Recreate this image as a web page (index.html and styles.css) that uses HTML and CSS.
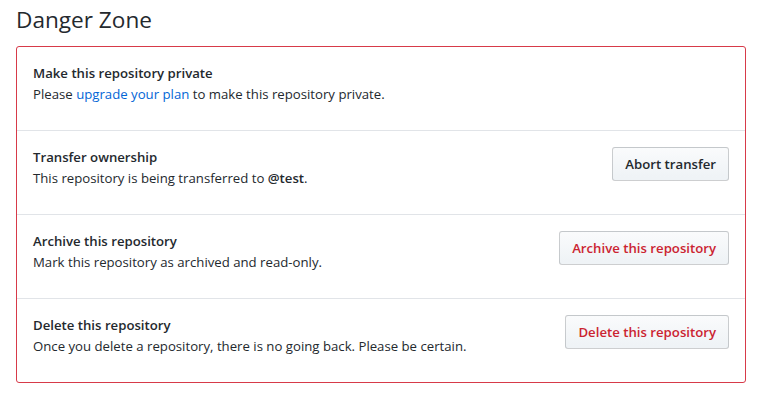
FILE: index.html
```html
<!DOCTYPE html>
<html lang="en">
<head>
  <meta charset="UTF-8">
  <title>Danger Zone</title>
  <link rel="stylesheet" href="styles.css">
</head>
<body>
  <h2 class="subhead">Danger Zone</h2>

  <div class="danger-box">
    <div class="row">
      <div class="info">
        <strong class="title">Make this repository private</strong>
        <p class="desc">Please <a href="#">upgrade your plan</a> to make this repository private.</p>
      </div>
    </div>

    <div class="row">
      <div class="info">
        <strong class="title">Transfer ownership</strong>
        <p class="desc">This repository is being transferred to <b>@test</b>.</p>
      </div>
      <button class="btn">Abort transfer</button>
    </div>

    <div class="row">
      <div class="info">
        <strong class="title">Archive this repository</strong>
        <p class="desc">Mark this repository as archived and read-only.</p>
      </div>
      <button class="btn btn-danger">Archive this repository</button>
    </div>

    <div class="row">
      <div class="info">
        <strong class="title">Delete this repository</strong>
        <p class="desc">Once you delete a repository, there is no going back. Please be certain.</p>
      </div>
      <button class="btn btn-danger">Delete this repository</button>
    </div>
  </div>
</body>
</html>
```

FILE: styles.css
```css
body {
  margin: 0;
  padding: 0 21px 0 16px;
  font-family: "Open Sans", "Noto Sans", sans-serif;
  font-size: 13.2px;
  line-height: 21px;
  color: #24292e;
  background: #fff;
}

.subhead {
  margin: 5px 0 11px;
  font-size: 22.6px;
  font-weight: 400;
  line-height: 30px;
}

.danger-box {
  border: 1px solid #d73a49;
  border-radius: 3px;
}

.row {
  display: flex;
  justify-content: space-between;
  align-items: flex-start;
  padding: 16px;
  height: 51px;
  border-top: 1px solid #e1e4e8;
}

.row:first-child {
  border-top: none;
}

.title {
  display: block;
  font-weight: 600;
}

.desc {
  margin: 0;
}

.desc a {
  color: #0366d6;
  text-decoration: none;
}

.desc b {
  font-weight: 600;
}

.btn {
  height: 34px;
  padding: 0 12px;
  font-family: inherit;
  font-size: 13.2px;
  font-weight: 600;
  color: #24292e;
  background: linear-gradient(-180deg, #fafbfc 0%, #eff3f6 90%);
  border: 1px solid rgba(27, 31, 35, 0.2);
  border-radius: 3px;
  cursor: pointer;
  white-space: nowrap;
}

.btn-danger {
  color: #cb2431;
}
```
